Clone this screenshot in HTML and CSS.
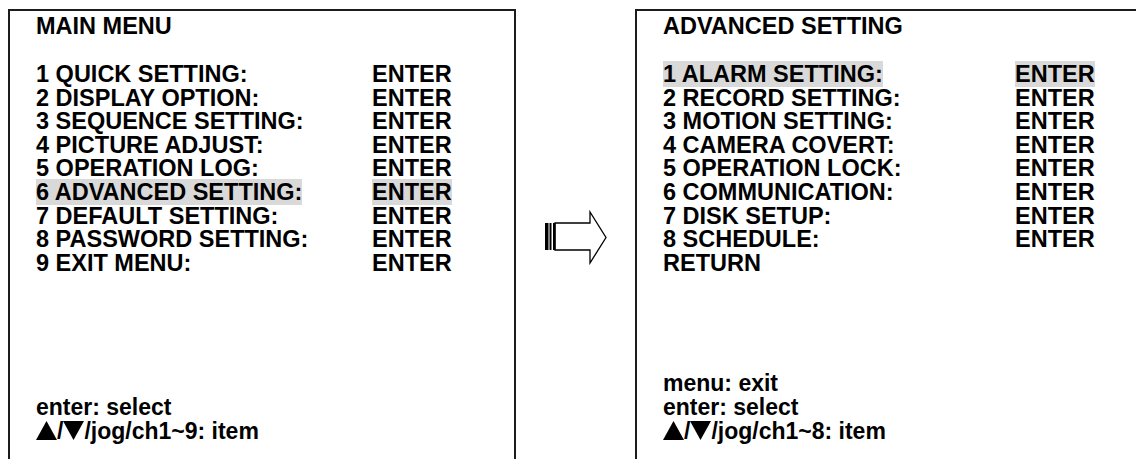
FILE: index.html
```html
<!DOCTYPE html>
<html lang="en">
<head>
    <meta charset="utf-8" />
    <title>DVR Menu - Advanced Setting</title>
    <link rel="stylesheet" href="styles.css">
</head>
<body>
<div class="screens">
    <section class="osd osd-main">
        <h1 class="osd-title">MAIN MENU</h1>
        <ul class="osd-list">
            <li><span class="osd-label"><mark>1 QUICK SETTING:</mark></span><span class="osd-value"><mark>ENTER</mark></span></li>
            <li><span class="osd-label"><mark>2 DISPLAY OPTION:</mark></span><span class="osd-value"><mark>ENTER</mark></span></li>
            <li><span class="osd-label"><mark>3 SEQUENCE SETTING:</mark></span><span class="osd-value"><mark>ENTER</mark></span></li>
            <li><span class="osd-label"><mark>4 PICTURE ADJUST:</mark></span><span class="osd-value"><mark>ENTER</mark></span></li>
            <li><span class="osd-label"><mark>5 OPERATION LOG:</mark></span><span class="osd-value"><mark>ENTER</mark></span></li>
            <li class="is-selected"><span class="osd-label"><mark>6 ADVANCED SETTING:</mark></span><span class="osd-value"><mark>ENTER</mark></span></li>
            <li><span class="osd-label"><mark>7 DEFAULT SETTING:</mark></span><span class="osd-value"><mark>ENTER</mark></span></li>
            <li><span class="osd-label"><mark>8 PASSWORD SETTING:</mark></span><span class="osd-value"><mark>ENTER</mark></span></li>
            <li><span class="osd-label"><mark>9 EXIT MENU:</mark></span><span class="osd-value"><mark>ENTER</mark></span></li>
        </ul>
        <div class="osd-help">
            <p>enter: select</p>
            <p><svg class="tri" viewBox="0 0 21 19" role="img" aria-label="up"><polygon points="0,19 10.5,0 21,19" /></svg>/<svg class="tri" viewBox="0 0 21 19" role="img" aria-label="down"><polygon points="0,0 21,0 10.5,19" /></svg>/jog/ch1~9: item</p>
        </div>
    </section>

    <div class="transition">
        <svg width="72" height="64" viewBox="0 0 72 64">
            <polygon points="15,18 50,18 50,7 66,32.5 50,58 50,45 15,45" fill="#fff" stroke="#000" stroke-width="1.3" />
            <rect x="5" y="18" width="3.5" height="27" fill="#000" />
            <rect x="9.5" y="18" width="2" height="27" fill="#000" />
            <rect x="13" y="18" width="2.5" height="27" fill="#000" />
        </svg>
    </div>

    <section class="osd osd-advanced">
        <h1 class="osd-title">ADVANCED SETTING</h1>
        <ul class="osd-list">
            <li class="is-selected"><span class="osd-label"><mark>1 ALARM SETTING:</mark></span><span class="osd-value"><mark>ENTER</mark></span></li>
            <li><span class="osd-label"><mark>2 RECORD SETTING:</mark></span><span class="osd-value"><mark>ENTER</mark></span></li>
            <li><span class="osd-label"><mark>3 MOTION SETTING:</mark></span><span class="osd-value"><mark>ENTER</mark></span></li>
            <li><span class="osd-label"><mark>4 CAMERA COVERT:</mark></span><span class="osd-value"><mark>ENTER</mark></span></li>
            <li><span class="osd-label"><mark>5 OPERATION LOCK:</mark></span><span class="osd-value"><mark>ENTER</mark></span></li>
            <li><span class="osd-label"><mark>6 COMMUNICATION:</mark></span><span class="osd-value"><mark>ENTER</mark></span></li>
            <li><span class="osd-label"><mark>7 DISK SETUP:</mark></span><span class="osd-value"><mark>ENTER</mark></span></li>
            <li><span class="osd-label"><mark>8 SCHEDULE:</mark></span><span class="osd-value"><mark>ENTER</mark></span></li>
            <li><span class="osd-label"><mark>RETURN</mark></span></li>
        </ul>
        <div class="osd-help">
            <p>menu: exit</p>
            <p>enter: select</p>
            <p><svg class="tri" viewBox="0 0 21 19" role="img" aria-label="up"><polygon points="0,19 10.5,0 21,19" /></svg>/<svg class="tri" viewBox="0 0 21 19" role="img" aria-label="down"><polygon points="0,0 21,0 10.5,19" /></svg>/jog/ch1~8: item</p>
        </div>
    </section>
</div>
</body>
</html>
```

FILE: styles.css
```css
html, body {
    margin: 0;
    background: #fff;
    overflow: hidden;
}

body {
    padding: 9px 0 0 8px;
    font-family: "Liberation Sans", Arial, Helvetica, sans-serif;
    font-weight: bold;
    color: #000;
}

.screens {
    display: flex;
    align-items: flex-start;
}

.osd {
    box-sizing: border-box;
    flex-shrink: 0;
    display: flex;
    flex-direction: column;
    height: 480px;
    padding: 4px 0 46px 26px;
    border: 2px solid #1c1c1c;
    border-bottom: 0;
}

.osd-main {
    width: 508px;
}

.osd-advanced {
    width: 530px;
}

.osd-title {
    margin: 0 0 24.4px 0;
    font-size: 23.5px;
    line-height: 23.6px;
    font-weight: bold;
}

.osd-list {
    list-style: none;
    margin: 0;
    padding: 0;
    font-size: 23.5px;
    line-height: 23.6px;
}

.osd-list li {
    white-space: nowrap;
}

.osd-label {
    display: inline-block;
    width: 336px;
}

.osd-advanced .osd-label {
    width: 352px;
}

mark {
    background: transparent;
    color: inherit;
}

.is-selected mark {
    background: #d9d9d9;
}

.osd-help {
    margin-top: auto;
    font-size: 23px;
    line-height: 24px;
}

.osd-help p {
    margin: 0;
    white-space: nowrap;
}

.tri {
    width: 21px;
    height: 19px;
    vertical-align: -1px;
    fill: #000;
}

.transition {
    width: 119px;
    flex-shrink: 0;
    display: flex;
    justify-content: center;
    padding-top: 196px;
}

.transition svg {
    display: block;
}
```
